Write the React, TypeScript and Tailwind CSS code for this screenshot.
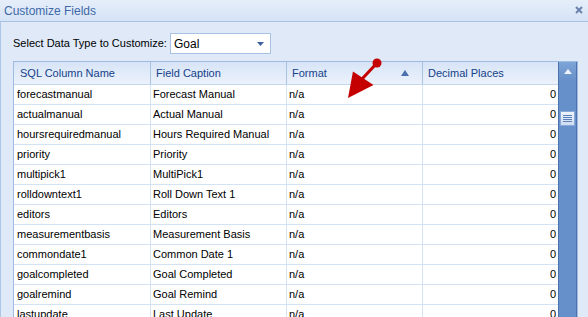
import React from 'react';

interface FieldRow {
  column: string;
  caption: string;
}

const rows: FieldRow[] = [
  { column: 'forecastmanual', caption: 'Forecast Manual' },
  { column: 'actualmanual', caption: 'Actual Manual' },
  { column: 'hoursrequiredmanual', caption: 'Hours Required Manual' },
  { column: 'priority', caption: 'Priority' },
  { column: 'multipick1', caption: 'MultiPick1' },
  { column: 'rolldowntext1', caption: 'Roll Down Text 1' },
  { column: 'editors', caption: 'Editors' },
  { column: 'measurementbasis', caption: 'Measurement Basis' },
  { column: 'commondate1', caption: 'Common Date 1' },
  { column: 'goalcompleted', caption: 'Goal Completed' },
  { column: 'goalremind', caption: 'Goal Remind' },
  { column: 'lastupdate', caption: 'Last Update' },
];

const App = () => {
  return (
    <div
      className="relative w-[588px] h-[317px] overflow-hidden bg-[#dfe9f7] text-[11px] text-black"
      style={{ fontFamily: '"Liberation Sans", Arial, sans-serif' }}
    >
      {/* Title bar */}
      <div className="h-[22px] flex items-center justify-between pl-[4px] pr-[5px] bg-gradient-to-b from-[#e6eefa] to-[#d5e3f5] border-b border-[#a9c2e3]">
        <span className="text-[12px] text-[#4069a8]">Customize Fields</span>
        <svg width="8" height="8" viewBox="0 0 8 8" className="mb-[1px]">
          <path d="M1 1 L7 7 M7 1 L1 7" stroke="#6c82ad" strokeWidth="2" />
        </svg>
      </div>

      {/* Body */}
      <div className="h-[295px] border-l border-[#aec6e6] pl-[12px] pr-[10px]">
        <div className="h-[39px] flex items-center pt-[4px]">
          <span className="w-[157px]">Select Data Type to Customize:</span>
          <div className="w-[101px] h-[21px] bg-white border border-[#a9c1e2] flex items-center justify-between pl-[3px] pr-[6px]">
            <span className="text-[12px]">Goal</span>
            <svg width="7" height="4" viewBox="0 0 7 4">
              <path d="M0 0 L7 0 L3.5 4 Z" fill="#3d62a4" />
            </svg>
          </div>
        </div>

        {/* Grid */}
        <div className="w-[565px] border border-[#9fbbe1] bg-white flex">
          <div className="w-[544px]">
            {/* Header */}
            <div className="h-[23px] flex border-b border-[#c3d6ef] bg-gradient-to-b from-[#d7e4f7] to-[#ecf2fb] text-[#15428b]">
              <div className="w-[137px] border-r border-[#a9c3e5] pl-[6px] flex items-center">SQL Column Name</div>
              <div className="w-[136px] border-r border-[#a9c3e5] pl-[5px] flex items-center">Field Caption</div>
              <div className="w-[136px] border-r border-[#a9c3e5] pl-[5px] pr-[13px] flex items-center justify-between">
                <span>Format</span>
                <svg width="8" height="6" viewBox="0 0 8 6">
                  <path d="M0 6 L8 6 L4 0 Z" fill="#4a6fae" />
                </svg>
              </div>
              <div className="flex-1 pl-[5px] flex items-center">Decimal Places</div>
            </div>
            {rows.map((row) => (
              <div key={row.column} className="h-[20px] flex border-b border-[#d3e2f5]">
                <div className="w-[137px] border-r border-[#d3e2f5] pl-[3px] flex items-center">{row.column}</div>
                <div className="w-[136px] border-r border-[#d3e2f5] pl-[2px] flex items-center">{row.caption}</div>
                <div className="w-[136px] border-r border-[#d3e2f5] pl-[2px] flex items-center">n/a</div>
                <div className="flex-1 pr-[2px] flex items-center justify-end">0</div>
              </div>
            ))}
          </div>

          {/* Scrollbar */}
          <div className="w-[19px] bg-[#6690c9] border-x border-[#4c72ae] flex flex-col items-center">
            <div className="h-[19px] w-full flex items-center justify-center bg-gradient-to-b from-[#7ea4d6] to-[#6690c9]">
              <svg width="8" height="5" viewBox="0 0 8 5">
                <path d="M0 5 L8 5 L4 0 Z" fill="#eef4fc" />
              </svg>
            </div>
            <div className="mt-[30px] w-[15px] h-[15px] bg-gradient-to-b from-[#eef4fc] to-[#cddcf1] border border-[#8aa9d6] flex flex-col items-center justify-center gap-[1px]">
              <div className="w-[9px] h-px bg-[#5b7fb8]" />
              <div className="w-[9px] h-px bg-[#5b7fb8]" />
              <div className="w-[9px] h-px bg-[#5b7fb8]" />
              <div className="w-[9px] h-px bg-[#5b7fb8]" />
            </div>
          </div>
        </div>
      </div>

      {/* Callout arrow */}
      <svg className="absolute left-[340px] top-[55px]" width="50" height="50" viewBox="0 0 50 50">
        <line x1="37" y1="8" x2="22" y2="24" stroke="#c40000" strokeWidth="3" />
        <circle cx="37" cy="8" r="4.5" fill="#c40000" />
        <path d="M13 16.5 L33.5 30 L8 43 Z" fill="#c40000" />
      </svg>
    </div>
  );
};

export default App;
